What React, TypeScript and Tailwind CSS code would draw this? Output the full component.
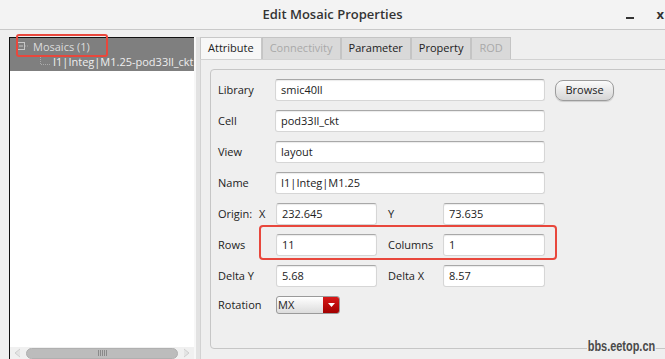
import React from "react";

const field =
  "h-[22px] bg-white rounded-[3px] border border-[#d6d6d6] border-t-[#a8a8a8] shadow-[inset_0_1px_1px_rgba(0,0,0,0.08)] pl-[5px] flex items-center text-[11px] text-[#222]";

function Field({ value, className = "" }: { value: string; className?: string }) {
  return <div className={`${field} ${className}`}>{value}</div>;
}

function Tab({ label, active, disabled }: { label: string; active?: boolean; disabled?: boolean }) {
  return (
    <div
      className={`h-[22px] px-[7px] flex items-center border border-b-0 text-[11px] ${
        active ? "bg-[#f7f7f7] border-[#c8c8c8] text-[#222]" : "bg-[#d9d9d9] border-[#c4c4c4]"
      } ${disabled ? "text-[#a9a9a9]" : "text-[#222]"}`}
    >
      {label}
    </div>
  );
}

export default function App() {
  return (
    <div
      className="relative w-[665px] h-[359px] overflow-hidden bg-[#efefef] text-[#222]"
      style={{ fontFamily: '"Open Sans", "Noto Sans", sans-serif' }}
    >
      {/* title bar */}
      <div className="h-[30px] grid grid-cols-[1fr_auto_1fr] items-center bg-[#f3f3f3] border-b border-[#c9c9c9]">
        <div />
        <div className="text-[13px] font-semibold text-[#333]">Edit Mosaic Properties</div>
        <div className="flex justify-end items-center gap-[22px] pr-[1px] text-[#333]">
          <span className="w-[8px] h-[2px] bg-[#333] mt-[6px]" />
          <span className="text-[13px] font-bold leading-none">x</span>
        </div>
      </div>

      <div className="flex pt-[7px] h-[329px]">
        {/* tree panel */}
        <div className="ml-[9px] w-[185px] flex flex-col bg-white border-l border-t border-[#111]">
          <div className="bg-[#7f7f7f] pt-[1px] pb-[1px]">
            <div className="h-[16px] flex items-center pl-[7px] text-[11px] text-[#dcdcdc]">
              <svg width="12" height="10" viewBox="0 0 12 10" className="mr-[4px]">
                <rect x="0.5" y="0.5" width="7" height="7" fill="none" stroke="#c8c8c8" />
                <line x1="2" y1="4" x2="6" y2="4" stroke="#c8c8c8" />
                <line x1="8" y1="4" x2="12" y2="4" stroke="#aaa" strokeDasharray="1 1" />
              </svg>
              Mosaics (1)
            </div>
            <div className="h-[15px] flex items-center pl-[30px] text-[11px] text-[#eeeeee] whitespace-nowrap overflow-hidden">
              <svg width="12" height="12" viewBox="0 0 12 12" className="mr-[1px] shrink-0">
                <line x1="0.5" y1="0" x2="0.5" y2="7" stroke="#aaa" strokeDasharray="1 1" />
                <line x1="1" y1="7.5" x2="11" y2="7.5" stroke="#aaa" strokeDasharray="1 1" />
              </svg>
              I1|Integ|M1.25-pod33ll_ckt
            </div>
          </div>
          <div className="flex-1" />
          <div className="h-[12px] flex items-center px-[2px] bg-[#f0f0f0]">
            <svg width="11" height="10" viewBox="0 0 11 10">
              <path d="M8 1 L3 5 L8 9" fill="#e4e4e4" stroke="#cfcfcf" />
            </svg>
            <div className="flex-1 mx-[3px] h-[11px] rounded-full bg-[#bcbcbc] border border-[#b0b0b0] flex items-center justify-center gap-[1px]">
              {[0, 1, 2, 3, 4].map((i) => (
                <span key={i} className="w-[1px] h-[6px] bg-[#8a8a8a]" />
              ))}
            </div>
            <svg width="11" height="10" viewBox="0 0 11 10">
              <path d="M3 1 L8 5 L3 9" fill="#e4e4e4" stroke="#cfcfcf" />
            </svg>
          </div>
        </div>
        <div className="w-[6px] bg-[#e2e2e2] border-l-2 border-[#f7f7f7]" />

        {/* properties pane */}
        <div className="flex-1 flex flex-col">
          <div className="flex">
            <Tab label="Attribute" active />
            <Tab label="Connectivity" disabled />
            <Tab label="Parameter" />
            <Tab label="Property" />
            <Tab label="ROD" disabled />
          </div>
          <div className="flex-1 border-l border-t border-[#d2d2d2] pl-[9px] pt-[9px] pb-[10px] -mr-[20px]">
            <div className="h-full rounded-[4px] border border-[#c6c6c6] pl-[7px] pt-[9px] flex flex-col gap-[9px] text-[11px]">
              {[
                ["Library", "smic40ll"],
                ["Cell", "pod33ll_ckt"],
                ["View", "layout"],
                ["Name", "I1|Integ|M1.25"],
              ].map(([label, value]) => (
                <div key={label} className="flex items-center">
                  <div className="w-[57px]">{label}</div>
                  <Field value={value} className="w-[270px]" />
                  {label === "Library" && (
                    <button className="ml-[10px] w-[59px] h-[21px] rounded-[8px] border border-[#9c9c9c] bg-gradient-to-b from-[#fbfbfb] to-[#d6d6d6] shadow-[0_1px_1px_rgba(0,0,0,0.15)] text-[11px] text-[#222]">
                      Browse
                    </button>
                  )}
                </div>
              ))}
              {[
                ["Origin:", "X", "232.645", "Y", "73.635"],
                ["Rows", "", "11", "Columns", "1"],
                ["Delta Y", "", "5.68", "Delta X", "8.57"],
              ].map(([label, sub, v1, label2, v2]) => (
                <div key={label} className="flex items-center">
                  <div className="w-[58px] flex">
                    <span className="w-[41px]">{label}</span>
                    <span>{sub}</span>
                  </div>
                  <Field value={v1} className="w-[101px]" />
                  <div className="w-[55px] ml-[11px]">{label2}</div>
                  <Field value={v2} className="w-[102px]" />
                </div>
              ))}
              <div className="flex items-center">
                <div className="w-[58px]">Rotation</div>
                <div className="w-[64px] h-[18px] rounded-[3px] border border-[#9a9a9a] bg-gradient-to-b from-[#ffffff] to-[#dcdcdc] flex items-center overflow-hidden">
                  <span className="flex-1 pl-[1px] text-[11px]">MX</span>
                  <div className="w-[16px] h-full bg-gradient-to-b from-[#d81818] to-[#a20000] flex items-center justify-center">
                    <svg width="7" height="4" viewBox="0 0 7 4">
                      <path d="M0 0 L7 0 L3.5 4 Z" fill="#fff" />
                    </svg>
                  </div>
                </div>
              </div>
            </div>
          </div>
        </div>
      </div>

      {/* annotation highlights */}
      <div className="absolute left-[16px] top-[34px] w-[92px] h-[23px] border-2 border-[#e8473c] rounded-[3px]" />
      <div className="absolute left-[259px] top-[225px] w-[298px] h-[35px] border-2 border-[#e8473c] rounded-[4px]" />
      <div
        className="absolute left-[587px] top-[339px] text-[14px] font-bold text-[#4a4a4a] leading-none bg-[#efefef] px-[1px] origin-left scale-x-[0.78]"
        style={{ fontFamily: '"Liberation Sans", sans-serif' }}
      >
        bbs.eetop.cn
      </div>
    </div>
  );
}
